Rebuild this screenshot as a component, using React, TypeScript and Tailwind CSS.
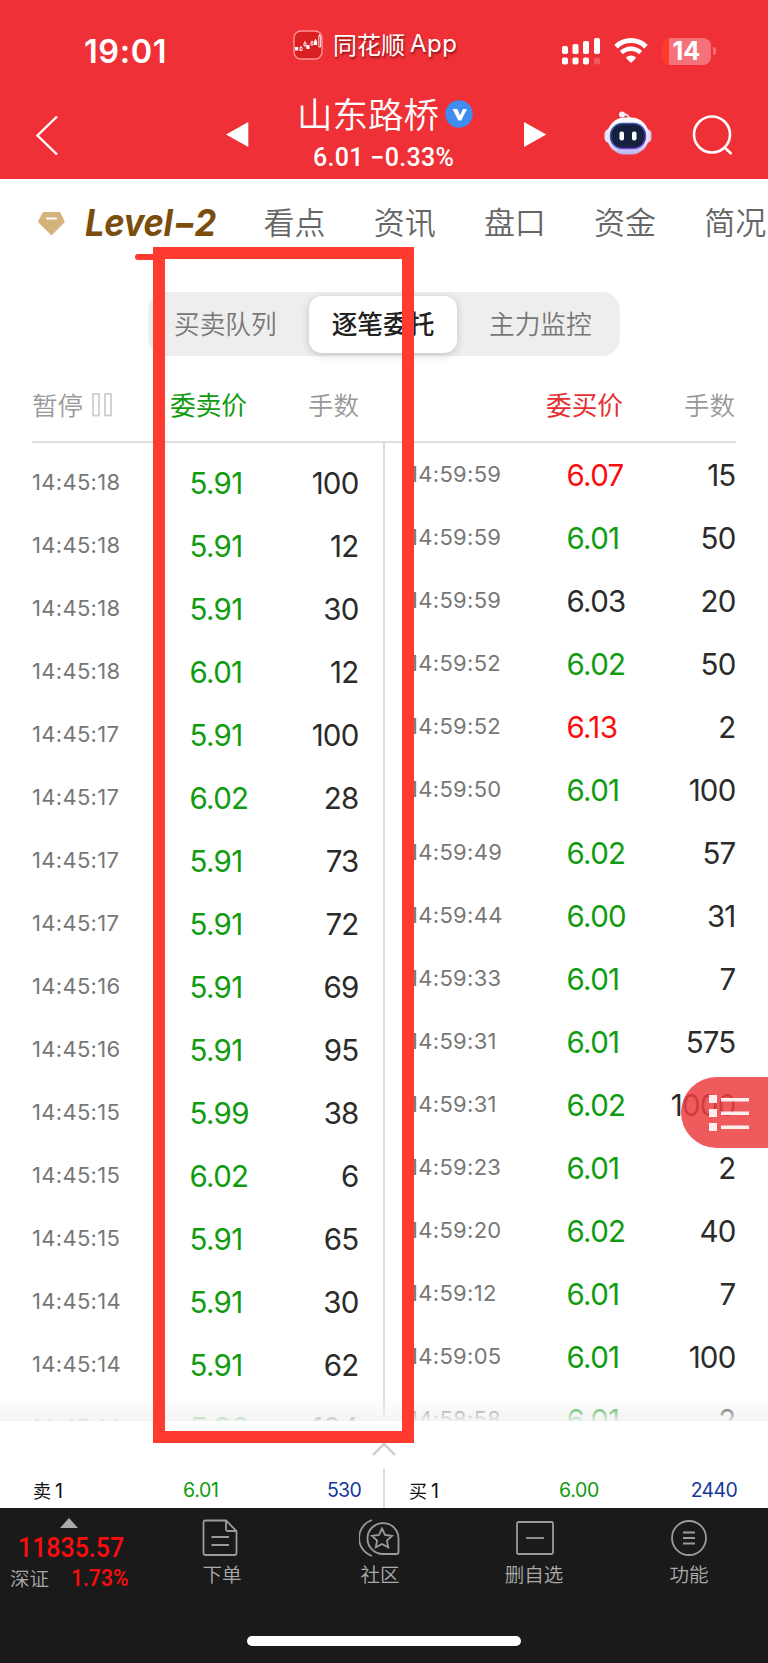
import type { ReactNode } from "react";

type Tone = "up" | "down" | "flat";
type Order = { time: string; price: string; lots: string; tone: Tone };

const order = (time: string, price: string, lots: string, tone: Tone = "down"): Order => ({ time, price, lots, tone });

const sells: Order[] = [
  order("14:45:18", "5.91", "100"),
  order("14:45:18", "5.91", "12"),
  order("14:45:18", "5.91", "30"),
  order("14:45:18", "6.01", "12"),
  order("14:45:17", "5.91", "100"),
  order("14:45:17", "6.02", "28"),
  order("14:45:17", "5.91", "73"),
  order("14:45:17", "5.91", "72"),
  order("14:45:16", "5.91", "69"),
  order("14:45:16", "5.91", "95"),
  order("14:45:15", "5.99", "38"),
  order("14:45:15", "6.02", "6"),
  order("14:45:15", "5.91", "65"),
  order("14:45:14", "5.91", "30"),
  order("14:45:14", "5.91", "62"),
  order("14:45:14", "5.98", "104"),
];

const buys: Order[] = [
  order("14:59:59", "6.07", "15", "up"),
  order("14:59:59", "6.01", "50"),
  order("14:59:59", "6.03", "20", "flat"),
  order("14:59:52", "6.02", "50"),
  order("14:59:52", "6.13", "2", "up"),
  order("14:59:50", "6.01", "100"),
  order("14:59:49", "6.02", "57"),
  order("14:59:44", "6.00", "31"),
  order("14:59:33", "6.01", "7"),
  order("14:59:31", "6.01", "575"),
  order("14:59:31", "6.02", "1000"),
  order("14:59:23", "6.01", "2"),
  order("14:59:20", "6.02", "40"),
  order("14:59:12", "6.01", "7"),
  order("14:59:05", "6.01", "100"),
  order("14:58:58", "6.01", "2"),
];

const toneClass: Record<Tone, string> = {
  up: "text-[#fb0d0d]",
  down: "text-[#109b10]",
  flat: "text-[#2b2b2b]",
};

function OrderRow({ item }: { item: Order }) {
  return (
    <div className="flex h-[63px] items-center font-['Inter'] whitespace-nowrap">
      <span className="-mt-[2px] w-[157.5px] shrink-0 text-[22px] font-[370] tracking-[0.3px] text-[#777]">{item.time}</span>
      <span className={`w-[90px] shrink-0 text-[29.5px] tracking-[-0.7px] ${toneClass[item.tone]}`}>{item.price}</span>
      <span className="w-[79px] shrink-0 text-right text-[29.5px] tracking-[-0.8px] text-[#2b2b2b]">{item.lots}</span>
    </div>
  );
}

function StatusBar() {
  return (
    <div className="flex h-[90px] items-start text-white">
      <div className="w-[293px] shrink-0 pt-[33px] pl-[84px] font-['Inter'] text-[32.500px] leading-[38px] font-semibold tracking-[0.6px]">19:01</div>
      <svg className="mt-[29.5px] h-[30px] w-[30px] shrink-0" viewBox="0 0 30 30" fill="none">
        <rect x="1" y="1" width="28" height="28" rx="7" fill="#d91f22" stroke="#fa9297" strokeWidth="1.4" />
        <path d="M2 17h3.200v3.500H2zM13.300 15h3.200v4h-3.200zM21 10.500h3v4.500h-3z" fill="#fff" />
        <path d="M7 17.500h2v3h-2zM11 13h2v3h-2zM18 12h2v3h-2zM25.800 6h1.800v11h-1.800z M8 16v1.500M12 11v2M19 10.500v1.500M26.700 4v2M22.500 9v6" stroke="#fff" strokeWidth=".9" />
      </svg>
      <div className="mt-[28px] ml-[10px] flex h-[30px] w-[232px] shrink-0 items-center pt-[1px] text-[24px] leading-[30px] [text-shadow:1px_2px_2px_rgba(60,0,0,.55)]">
        <span className="font-['Noto_Sans_CJK_SC']">同花顺</span>
        <span className="ml-[5px] font-['Inter'] text-[24px] tracking-[0.5px]">App</span>
      </div>
      <svg className="mt-[37px] -ml-[4px] h-[29px] w-[40px] shrink-0" viewBox="0 0 40 29" fill="#fff">
        <rect x="1" y="9" width="6" height="8" rx="1.800" />
        <rect x="11.500" y="7" width="6" height="10" rx="1.800" />
        <rect x="22" y="4" width="6" height="13" rx="1.800" />
        <rect x="33" y="1" width="6" height="16" rx="1.800" />
        <rect x="1" y="20.500" width="6" height="7" rx="1.800" />
        <rect x="11.500" y="20.500" width="6" height="7" rx="1.800" />
        <rect x="22" y="20.500" width="6" height="7" rx="1.800" />
        <rect x="33" y="20.500" width="6" height="7" rx="1.800" opacity=".2" />
      </svg>
      <svg className="mt-[38px] ml-[13px] h-[26px] w-[34px] shrink-0" viewBox="0 0 34 26" fill="none" stroke="#fff">
        <path d="M2 8.700a21.500 21.500 0 0 1 30 0" strokeWidth="5" />
        <path d="M7.400 14.600a13.800 13.800 0 0 1 19.200 0" strokeWidth="4.500" />
        <path d="M17 25l-5.200-5.300a7.500 7.500 0 0 1 10.400 0z" fill="#fff" stroke="none" />
      </svg>
      <div className="mt-[38px] ml-[14px] h-[27px] w-[49px] shrink-0 rounded-[8px] bg-[linear-gradient(90deg,#ff3a2c_7px,#f6727a_7px)] pl-[10.500px] font-['Inter'] text-[25px] leading-[27px] font-bold">
        14
      </div>
      <div className="mt-[47px] ml-[2px] h-[8px] w-[3px] shrink-0 rounded-r-full bg-[#f6727a]" />
    </div>
  );
}

function Robot() {
  return (
    <svg className="h-[46px] w-[48px]" viewBox="0 0 48 46" fill="none">
      <defs>
        <linearGradient id="shell" x1="0" y1="0" x2="0" y2="1">
          <stop stopColor="#fff" />
          <stop offset=".65" stopColor="#e6e0fb" />
          <stop offset="1" stopColor="#b9b4ee" />
        </linearGradient>
        <linearGradient id="rim" x1="0" y1="0" x2="1" y2="1">
          <stop stopColor="#27619e" />
          <stop offset="1" stopColor="#783be0" />
        </linearGradient>
      </defs>
      <path d="M18 3.500q7-1 7 5" stroke="#e6dff6" strokeWidth="2" />
      <circle cx="18" cy="3.500" r="3" fill="#f4effc" />
      <rect x=".5" y="18" width="10" height="14" rx="5" fill="#e4dffb" />
      <rect x="37.500" y="18" width="10" height="14" rx="5" fill="#d4cdf8" />
      <rect x="3" y="6.500" width="42" height="37" rx="18" fill="url(#shell)" />
      <rect x="6.500" y="12.500" width="35" height="25" rx="12" fill="#14213f" stroke="url(#rim)" strokeWidth="1.500" />
      <rect x="15.500" y="20.500" width="4.500" height="9" rx="2" fill="#fff" />
      <rect x="28" y="20.500" width="4.500" height="9" rx="2" fill="#fff" />
    </svg>
  );
}

function TitleBar() {
  return (
    <div className="flex h-[89px] items-start text-white">
      <svg className="mt-[25px] ml-[35px] h-[41px] w-[24px] shrink-0" viewBox="0 0 24 41" fill="none" stroke="#fff" strokeWidth="2.400">
        <path d="M22 1.500 2.500 20.500 22 39.500" />
      </svg>
      <svg className="mt-[31px] ml-[167px] h-[27px] w-[23px] shrink-0" viewBox="0 0 23 27" fill="#fff">
        <path d="M0 13.500 22.300 1v25z" />
      </svg>
      <div className="ml-[48px] w-[176px] shrink-0">
        <div className="-mt-[1px] flex h-[50px] items-center">
          <span className="-mt-[2px] font-['Noto_Sans_CJK_SC'] text-[35.500px] leading-[50px] font-[350] whitespace-nowrap">山东路桥</span>
          <svg className="ml-[6px] h-[28px] w-[28px] shrink-0" viewBox="0 0 28 28">
            <circle cx="14" cy="14" r="13.700" fill="#3f8def" />
            <path d="M7.500 9h4.800l2.800 6.200L18 9h4l-5.800 11.500h-2.900z" fill="#fff" />
          </svg>
        </div>
        <div className="-mt-[6px] ml-[16px] font-['Roboto'] text-[25px] leading-[50px] font-medium tracking-[0.3px] whitespace-nowrap">6.01 −0.33%</div>
      </div>
      <svg className="mt-[31px] ml-[50px] h-[27px] w-[24px] shrink-0" viewBox="0 0 24 27" fill="#fff">
        <path d="M1 1v25l22.300-12.500z" />
      </svg>
      <div className="mt-[21px] ml-[57px] shrink-0"><Robot /></div>
      <svg className="mt-[24px] ml-[40px] h-[42px] w-[42px] shrink-0" viewBox="0 0 42 42" fill="none" stroke="#fff" strokeWidth="2.600">
        <circle cx="20" cy="20.500" r="18" />
        <path d="m32 33 7.500 7" />
      </svg>
    </div>
  );
}

function Tabs() {
  return (
    <nav className="flex h-[88px] items-center">
      <svg className="mt-[1px] ml-[38px] h-[24px] w-[27px] shrink-0" viewBox="0 0 27 24">
        <path d="M6 0h15q1 0 1.600 1l3.800 8q.4 1-.3 1.800L14.500 22.600q-1 1-2 0L.7 10.800q-.8-.8-.3-1.800L4.400 1Q5 0 6 0z" fill="#d4b27c" />
        <path d="M9 6.500h9" stroke="#fff" strokeWidth="1.800" strokeLinecap="round" />
      </svg>
      <div className="ml-[20px] h-[44px] w-[178.5px] shrink-0">
        <span className="inline-block origin-left scale-x-[0.92] font-['Inter'] text-[37.500px] leading-[44px] font-bold tracking-[-0.3px] whitespace-nowrap text-[#7c4e0e] italic">Level<span className="tracking-[-1px]">−2</span></span>
      </div>
      <div className="-mt-[4px] flex gap-[48.2px] font-['Noto_Sans_CJK_SC'] text-[31px] leading-[44px] font-[350] whitespace-nowrap text-[#666]">
        {["看点", "资讯", "盘口", "资金", "简况"].map((t) => <span key={t}>{t}</span>)}
      </div>
    </nav>
  );
}

function Segments() {
  return (
    <div className="mt-[25px] mr-[148px] ml-[148px] flex h-[64px] items-center rounded-[18px] bg-[#eee] font-['Noto_Sans_CJK_SC'] text-[25.700px] leading-[38px] text-[#777]">
      <div className="-mt-[3px] w-[161px] pl-[26px] font-[350]">买卖队列</div>
      <div className="flex h-[57px] w-[148px] items-center justify-center rounded-[13px] bg-white pb-[3px] font-medium text-[#222] shadow-[0_2px_8px_rgba(0,0,20,.18)]">逐笔委托</div>
      <div className="-mt-[3px] flex-1 pl-[32px] font-[350]">主力监控</div>
    </div>
  );
}

function TableHead() {
  return (
    <div className="mx-[32px] flex h-[87px] items-center border-b-2 border-[#dedede] pt-[11px] font-['Noto_Sans_CJK_SC'] text-[25.500px] leading-[40px] whitespace-nowrap text-[#999]">
      <span className="w-[60px] font-[350]">暂停</span>
      <svg className="mt-[2px] h-[24px] w-[21px]" viewBox="0 0 21 24" fill="none" stroke="#ccc" strokeWidth="1.700">
        <rect x="1" y="1" width="6" height="21.500" />
        <rect x="13" y="1" width="6" height="21.500" />
      </svg>
      <span className="ml-[57px] w-[138px] text-[25.700px] text-[#109b10]">委卖价</span>
      <span className="w-[238px] font-[350]">手数</span>
      <span className="w-[138px] text-[25.700px] text-[#e5302f]">委买价</span>
      <span className="font-[350]">手数</span>
    </div>
  );
}

function OrderLists() {
  return (
    <div className="relative h-[978px] overflow-hidden">
      <div className="flex">
        <div className="w-[383px] pt-[9px] pl-[32px]">
          {sells.map((o, i) => <OrderRow key={i} item={o} />)}
        </div>
        <div className="h-[978px] w-[2px] bg-[#dcdcdc]" />
        <div className="flex-1 pt-[1px] pl-[24px]">
          {buys.map((o, i) => <OrderRow key={i} item={o} />)}
        </div>
      </div>
      <div className="absolute inset-x-0 bottom-0 h-[24px] bg-[linear-gradient(180deg,rgba(255,255,255,0),rgba(243,243,243,.93))]" />
    </div>
  );
}

function QuoteRow({ label, price, lots }: { label: string; price: string; lots: string }) {
  return (
    <div className="flex h-[40px] w-[328px] shrink-0 items-center pt-[3px] text-[19.500px] leading-[37px] text-[#111]">
      <span className="w-[150px]"><span className="font-['Noto_Sans_CJK_SC'] text-[18px]">{label}</span><span className="ml-[4px] font-['Inter']">1</span></span>
      <span className="w-[100px] font-['Inter'] tracking-[-0.3px] text-[#109b10]">{price}</span>
      <span className="flex-1 text-right font-['Inter'] tracking-[-0.7px] text-[#14379b]">{lots}</span>
    </div>
  );
}

function BestQuotes() {
  return (
    <div className="relative h-[87px] bg-white">
      <svg className="mx-auto block h-[36px] w-[26px] pt-[20px]" viewBox="0 0 26 16" fill="none" stroke="#ccc" strokeWidth="2.400">
        <path d="M2 14 13 3l11 11" />
      </svg>
      <div className="mt-[12px] flex h-[39px] pl-[33px]">
        <QuoteRow label="卖" price="6.01" lots="530" />
        <div className="mr-[24px] ml-[22px] h-[39px] w-[2px] shrink-0 bg-[#dcdcdc]" />
        <div className="w-[326px]"><QuoteRow label="买" price="6.00" lots="2440" /></div>
      </div>
    </div>
  );
}

function NavItem({ label, className, children }: { label: string; className: string; children: ReactNode }) {
  return (
    <div className={`flex flex-col items-center pt-[10px] ${className}`}>
      <svg className="h-[40px] w-[42px]" viewBox="0 0 42 40" fill="none" stroke="#9b9b9b" strokeWidth="1.800">{children}</svg>
      <span className="-mt-[1px] font-['Noto_Sans_CJK_SC'] text-[19.500px] leading-[34px] font-[350] text-[#aaa]">{label}</span>
    </div>
  );
}

function BottomBar() {
  return (
    <footer className="h-[155px] bg-[#1a1a1a]">
      <div className="flex h-[128px]">
        <div className="w-[138px] pt-[10px]">
          <svg className="ml-[60px] h-[10px] w-[18px]" viewBox="0 0 18 10" fill="#aaa"><path d="m9 0 9 10H0z" /></svg>
          <div className="mt-[1px] ml-[18px] origin-left scale-x-[0.89] font-['Roboto'] text-[28px] leading-[38px] font-medium whitespace-nowrap text-[#fb0d0d]">11835.57</div>
          <div className="-mt-[4px] flex items-center leading-[30px]">
            <span className="ml-[10px] w-[61px] font-['Noto_Sans_CJK_SC'] text-[19.500px] font-[350] text-[#aaa]">深证</span>
            <span className="origin-left scale-x-[0.88] font-['Roboto'] text-[24px] font-medium text-[#fb0d0d]">1.73%</span>
          </div>
        </div>
        <NavItem label="下单" className="w-[168px]">
          <path d="M4.500 2.500h20.500l10.500 10.500v22q0 2-2 2h-29q-2 0-2-2v-31q0-1.500 2-1.500zM25 2.500v9q0 1.500 1.500 1.500H35.500M10.500 19h17.500M10.500 27h17.500" />
        </NavItem>
        <NavItem label="社区" className="w-[148px]">
          <path d="M39.500 20.500v13.500q0 2-2 2H23A15.500 15.500 0 1 1 39.500 20.500z M13 38A19 19 0 0 1 13 2" />
          <path d="m23 10.500 3 6.400 7 .9-5.100 4.700 1.300 6.800-6.200-3.300-6.200 3.300 1.300-6.800-5.100-4.700 7-.9z" />
        </NavItem>
        <NavItem label="删自选" className="w-[160px]">
          <rect x="4" y="4" width="36" height="32" rx="1.500" />
          <path d="M13 20h18" />
        </NavItem>
        <NavItem label="功能" className="ml-[2px] w-[146px]">
          <circle cx="21" cy="20" r="17" />
          <path d="M15 14.500h12M15 20h12M15 25.500h12" />
        </NavItem>
      </div>
      <div className="mx-auto h-[10px] w-[274px] rounded-full bg-white" />
    </footer>
  );
}

export default function App() {
  return (
    <div className="relative h-[1663px] w-[768px] overflow-hidden bg-white">
      <header className="h-[179px] bg-[#ef3036]">
        <StatusBar />
        <TitleBar />
      </header>
      <Tabs />
      <Segments />
      <TableHead />
      <OrderLists />
      <BestQuotes />
      <BottomBar />

      {/* Floating shortcut button */}
      <div className="absolute top-[1077px] right-0 flex h-[71px] w-[87px] items-center rounded-l-full bg-[#ec3e41]/85 pl-[28px]">
        <svg className="h-[38px] w-[40px] shrink-0" viewBox="0 0 40 38" fill="#fff" fillOpacity=".9">
          <path d="M0 1h8v8H0zM0 15h8v8H0zM0 29h8v8H0zM12 4h28v3.500H12zM12 17.500h28v3.500H12zM12 31.500h28v3.500H12z" />
        </svg>
      </div>

      {/* Hand-drawn highlight around the sell column */}
      <div className="absolute top-[254px] left-[135px] h-[6px] w-[30px] rounded-full bg-[#ff3a2f]" />
      <div className="absolute top-[247px] left-[153px] h-[1196px] w-[261px] border-[12px] border-[#ff3a2f]" />
    </div>
  );
}
